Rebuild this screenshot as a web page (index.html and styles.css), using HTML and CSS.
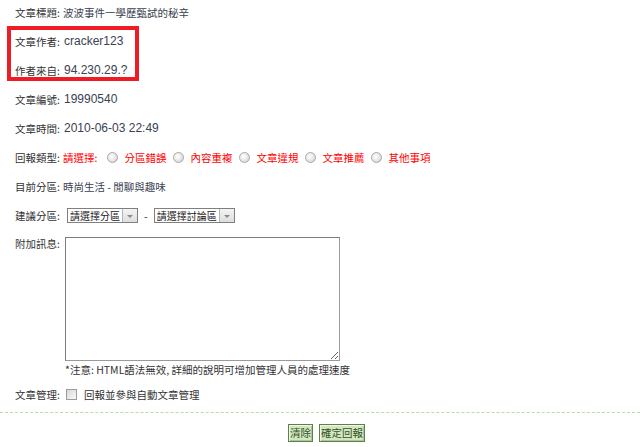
FILE: index.html
```html
<!DOCTYPE html>
<html lang="zh-Hant">
<head>
    <meta charset="UTF-8">
    <meta name="viewport" content="width=device-width, initial-scale=1.0">
    <title>文章回報</title>
    <link rel="stylesheet" href="styles.css">
</head>
<body>
    <div class="report">
        <div class="fields">
            <div class="row">
                <span class="label">文章標題:</span>
                <span class="value">波波事件一學歷甄試的秘辛</span>
            </div>
            <div class="row">
                <span class="label">文章作者:</span>
                <span class="value en">cracker123</span>
            </div>
            <div class="row">
                <span class="label">作者來自:</span>
                <span class="value en">94.230.29.?</span>
            </div>
            <div class="row">
                <span class="label">文章編號:</span>
                <span class="value en">19990540</span>
            </div>
            <div class="row">
                <span class="label">文章時間:</span>
                <span class="value en">2010-06-03 22:49</span>
            </div>
            <div class="row">
                <span class="label">回報類型:</span>
                <span class="value red">請選擇:</span>
                <label class="choice"><input type="radio" name="type"><span>分區錯誤</span></label>
                <label class="choice"><input type="radio" name="type"><span>內容重複</span></label>
                <label class="choice"><input type="radio" name="type"><span>文章違規</span></label>
                <label class="choice"><input type="radio" name="type"><span>文章推薦</span></label>
                <label class="choice"><input type="radio" name="type"><span>其他事項</span></label>
            </div>
            <div class="row">
                <span class="label">目前分區:</span>
                <span class="value">時尚生活 - 閒聊與趣味</span>
            </div>
            <div class="row">
                <span class="label">建議分區:</span>
                <span class="select first"><select><option>請選擇分區</option></select></span>
                <span class="dash">-</span>
                <span class="select second"><select><option>請選擇討論區</option></select></span>
            </div>
            <div class="row message">
                <span class="label">附加訊息:</span>
                <textarea></textarea>
            </div>
            <div class="note">*注意: HTML語法無效, 詳細的說明可增加管理人員的處理速度</div>
            <div class="row">
                <span class="label">文章管理:</span>
                <label class="check"><input type="checkbox"><span>回報並參與自動文章管理</span></label>
            </div>
        </div>

        <div class="highlight"></div>

        <div class="actions">
            <button class="btn">清除</button>
            <button class="btn">確定回報</button>
        </div>
    </div>
</body>
</html>
```

FILE: styles.css
```css
* {
    margin: 0;
    padding: 0;
    box-sizing: border-box;
}

body {
    background-color: #fff;
    font-family: "Noto Sans CJK TC", "Liberation Sans", sans-serif;
    font-size: 10.5px;
    color: #333;
}

.report {
    position: relative;
    padding-top: 2px;
}

.fields {
    padding-left: 15px;
}

.row {
    display: flex;
    align-items: center;
    height: 20px;
    margin-bottom: 9px;
    white-space: nowrap;
}

.label {
    width: 48px;
    flex-shrink: 0;
    color: #333;
}

.value {
    color: #3a4250;
}

.en {
    font-family: "Liberation Sans", Arial, sans-serif;
    font-size: 12px;
    padding-left: 1px;
}

.red {
    color: #f00;
}

.choice {
    display: flex;
    align-items: center;
    color: #f00;
}

.choice input {
    appearance: none;
    width: 11px;
    height: 11px;
    margin: 0 6px 0 10px;
    border: 1px solid #a9a9a9;
    border-radius: 50%;
    background: radial-gradient(circle at 40% 40%, #fff 0, #f0f0f0 35%, #c8c8c8 100%);
}

.choice + .choice input {
    margin-left: 7px;
}

/* fake dropdown arrow over the native select */
.select {
    position: relative;
    display: inline-block;
    height: 15px;
}

.select.first {
    margin-left: 4px;
}

.select select {
    appearance: none;
    height: 15px;
    padding: 0 15px 0 2px;
    border: 1px solid #7f7f7f;
    background-color: #fff;
    font-family: inherit;
    font-size: 10px;
    line-height: 13px;
    color: #222;
}

.select.first select {
    width: 71px;
}

.select.second select {
    width: 81px;
}

.select::before {
    content: "";
    position: absolute;
    top: 1px;
    right: 1px;
    width: 14px;
    height: 13px;
    background: linear-gradient(#f4f4f4, #dedede);
    border-left: 1px solid #b5b5b5;
}

.select::after {
    content: "";
    position: absolute;
    top: 7px;
    right: 5px;
    border-left: 3px solid transparent;
    border-right: 3px solid transparent;
    border-top: 3px solid #8a8a8a;
}

.dash {
    margin: 0 6px;
}

.row.message {
    align-items: flex-start;
    height: auto;
    margin-top: 12px;
    margin-bottom: 2px;
}

.row.message .label {
    line-height: 14px;
}

.row.message textarea {
    width: 275px;
    height: 124px;
    margin-left: 2px;
    border: 1px solid #9a9a9a;
    border-top-color: #7c7c7c;
    border-left-color: #7c7c7c;
    font-family: inherit;
}

.note {
    padding-left: 50px;
    line-height: 14px;
    margin-bottom: 7px;
    color: #333;
}

.check {
    display: flex;
    align-items: center;
}

.check input {
    appearance: none;
    width: 11px;
    height: 11px;
    margin: 0 7px 0 3px;
    border: 1px solid #9c9c9c;
    background: linear-gradient(135deg, #d8d8d8, #fafafa);
}

.highlight {
    position: absolute;
    left: 7px;
    top: 26px;
    width: 132px;
    height: 55px;
    border: 4px solid #ee1c25;
}

.actions {
    margin-top: -1px;
    border-top: 1px dashed #b9dcaa;
    padding: 11px 0 0 13px;
    text-align: center;
    font-size: 0;
}

.btn {
    height: 18px;
    margin: 0 3px;
    padding: 0 1px;
    border: 1px solid #5e8246;
    box-shadow: inset 1px 1px 0 #eef6e8, inset -1px -1px 0 #a9c796;
    background-color: #d3e6c3;
    font-family: "Noto Sans CJK TC", sans-serif;
    font-size: 10.5px;
    line-height: 16px;
    color: #32521f;
    cursor: pointer;
}
```
